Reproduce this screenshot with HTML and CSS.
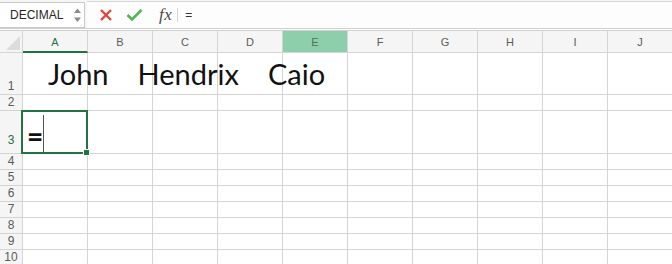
FILE: index.html
```html
<!DOCTYPE html>
<html>
<head>
<meta charset="utf-8">
<link rel="stylesheet" href="styles.css">
</head>
<body>
<div class="toolbar">
  <div class="namebox">
    <span class="name">DECIMAL</span>
    <span class="stepper">
      <svg width="9" height="16" viewBox="0 0 9 16"><path d="M1 6 L4.5 1.5 L8 6 Z M1 10.5 L8 10.5 L4.5 15 Z" fill="#8a8a8a"/></svg>
    </span>
  </div>
  <div class="formula">
    <svg class="ico" width="14" height="14" viewBox="0 0 14 14"><path d="M2 2 L12 12 M12 2 L2 12" stroke="#e2453c" stroke-width="2.4" stroke-linecap="butt"/></svg>
    <svg class="ico ok" width="17" height="14" viewBox="0 0 17 14"><path d="M1.5 7 L6 11.5 L15.5 2" stroke="#52b551" stroke-width="2.6" fill="none"/></svg>
    <span class="fx">fx</span>
    <span class="sep"></span>
    <span class="ftext">=</span>
  </div>
</div>
<div class="grid">
  <div class="corner"><svg width="14" height="14" viewBox="0 0 14 14"><path d="M14 0 L14 14 L0 14 Z" fill="#dcdcdc"/></svg></div>
  <div class="ch sel">A</div><div class="ch">B</div><div class="ch">C</div><div class="ch">D</div><div class="ch hl">E</div><div class="ch">F</div><div class="ch">G</div><div class="ch">H</div><div class="ch">I</div><div class="ch">J</div>

  <div class="rh">1</div>
  <div class="c big"><span class="w1">John</span><span class="w2">Hendrix</span><span class="w3">Caio</span></div><div class="c"></div><div class="c"></div><div class="c"></div><div class="c"></div><div class="c"></div><div class="c"></div><div class="c"></div><div class="c"></div><div class="c"></div>

  <div class="rh">2</div>
  <div class="c"></div><div class="c"></div><div class="c"></div><div class="c"></div><div class="c"></div><div class="c"></div><div class="c"></div><div class="c"></div><div class="c"></div><div class="c"></div>

  <div class="rh rsel">3</div>
  <div class="c active"><span class="eq">=</span><span class="caret"></span><span class="handle"></span></div><div class="c"></div><div class="c"></div><div class="c"></div><div class="c"></div><div class="c"></div><div class="c"></div><div class="c"></div><div class="c"></div><div class="c"></div>

  <div class="rh">4</div>
  <div class="c"></div><div class="c"></div><div class="c"></div><div class="c"></div><div class="c"></div><div class="c"></div><div class="c"></div><div class="c"></div><div class="c"></div><div class="c"></div>
  <div class="rh">5</div>
  <div class="c"></div><div class="c"></div><div class="c"></div><div class="c"></div><div class="c"></div><div class="c"></div><div class="c"></div><div class="c"></div><div class="c"></div><div class="c"></div>
  <div class="rh">6</div>
  <div class="c"></div><div class="c"></div><div class="c"></div><div class="c"></div><div class="c"></div><div class="c"></div><div class="c"></div><div class="c"></div><div class="c"></div><div class="c"></div>
  <div class="rh">7</div>
  <div class="c"></div><div class="c"></div><div class="c"></div><div class="c"></div><div class="c"></div><div class="c"></div><div class="c"></div><div class="c"></div><div class="c"></div><div class="c"></div>
  <div class="rh">8</div>
  <div class="c"></div><div class="c"></div><div class="c"></div><div class="c"></div><div class="c"></div><div class="c"></div><div class="c"></div><div class="c"></div><div class="c"></div><div class="c"></div>
  <div class="rh">9</div>
  <div class="c"></div><div class="c"></div><div class="c"></div><div class="c"></div><div class="c"></div><div class="c"></div><div class="c"></div><div class="c"></div><div class="c"></div><div class="c"></div>
  <div class="rh">10</div>
  <div class="c"></div><div class="c"></div><div class="c"></div><div class="c"></div><div class="c"></div><div class="c"></div><div class="c"></div><div class="c"></div><div class="c"></div><div class="c"></div>
</div>
</body>
</html>
```
FILE: styles.css
```css
html, body {
  margin: 0;
  padding: 0;
  background: #ffffff;
  width: 672px;
  height: 264px;
  overflow: hidden;
  font-family: "Liberation Sans", Arial, sans-serif;
}
.toolbar {
  height: 28px;
  display: flex;
  background: #f6f6f6;
  border-bottom: 1px solid #cfcfcf;
  box-sizing: content-box;
}
.namebox {
  margin-top: 2px;
  width: 84px;
  height: 24px;
  background: #ffffff;
  border: 1px solid #c9c9c9;
  border-left: none;
  display: flex;
  align-items: center;
  box-sizing: content-box;
}
.name {
  font-size: 12px;
  color: #262626;
  margin-left: 10px;
  width: 63px;
}
.stepper {
  display: flex;
  align-items: center;
  height: 16px;
}
.formula {
  flex: 1;
  margin-top: 1px;
  margin-left: 2px;
  height: 26px;
  background: #fdfdfd;
  border-top: 1px solid #d6d6d6;
  display: flex;
  align-items: center;
}
.ico { margin-left: 12px; }
.ico.ok { margin-left: 13px; }
.fx {
  font-family: "Liberation Serif", "DejaVu Serif", serif;
  font-style: italic;
  font-size: 17px;
  color: #4a4a4a;
  margin-left: 16px;
  letter-spacing: 0.5px;
}
.sep {
  width: 1px;
  height: 14px;
  background: #d4d4d4;
  margin-left: 5px;
}
.ftext {
  font-size: 12px;
  color: #333;
  margin-left: 7px;
}
.grid {
  position: relative;
  margin-top: 1px;
  display: grid;
  grid-template-columns: 23px repeat(10, 65px);
  grid-template-rows: 22px 42px 16px 43px repeat(7, 16px);
  border-top: 1px solid #d0d0d0;
}
.grid > div {
  box-sizing: border-box;
  border-right: 1px solid #d4d4d4;
  border-bottom: 1px solid #d4d4d4;
}
.corner {
  background: #f5f5f5;
  display: flex;
  align-items: flex-end;
  justify-content: flex-end;
  padding: 0 2px 2px 0;
}
.ch {
  background: #f5f5f5;
  color: #5b5b5b;
  font-size: 11px;
  display: flex;
  align-items: center;
  justify-content: center;
  padding-top: 1px;
}
.grid > .ch.sel {
  color: #217346;
  border-bottom: 2px solid #217346;
  padding-top: 2px;
}
.grid > .ch.hl {
  background: #8dcfab;
  color: #4c6f5c;
}
.rh {
  background: #f5f5f5;
  color: #5b5b5b;
  font-size: 12px;
  display: flex;
  align-items: flex-end;
  justify-content: center;
  padding-bottom: 1px;
  line-height: 14px;
}
.rh.rsel {
  color: #217346;
  padding-bottom: 6px;
}
.big {
  position: relative;
  overflow: visible;
  white-space: nowrap;
  font-family: Lato, "Open Sans", sans-serif;
  font-size: 29px;
  color: #111;
  display: flex;
  align-items: flex-end;
  padding-bottom: 3px;
  z-index: 2;
}
.w1 { margin-left: 25px; }
.w2 { margin-left: 29px; }
.w3 { margin-left: 29px; }
.grid > .active {
  position: relative;
  overflow: visible;
}
.eq {
  position: absolute;
  left: 4px;
  top: 8px;
  font-family: Lato, sans-serif;
  font-size: 28px;
  font-weight: bold;
  color: #111;
}
.caret {
  position: absolute;
  left: 20px;
  top: 4px;
  width: 1px;
  height: 38px;
  background: #555;
}
.active::after {
  content: "";
  position: absolute;
  left: -2px;
  top: -1px;
  width: 67px;
  height: 44px;
  border: 2px solid #217346;
  box-sizing: border-box;
}
.handle {
  position: absolute;
  right: -3px;
  bottom: -3px;
  width: 5px;
  height: 5px;
  background: #217346;
  border: 1px solid #fff;
  z-index: 3;
}
```
